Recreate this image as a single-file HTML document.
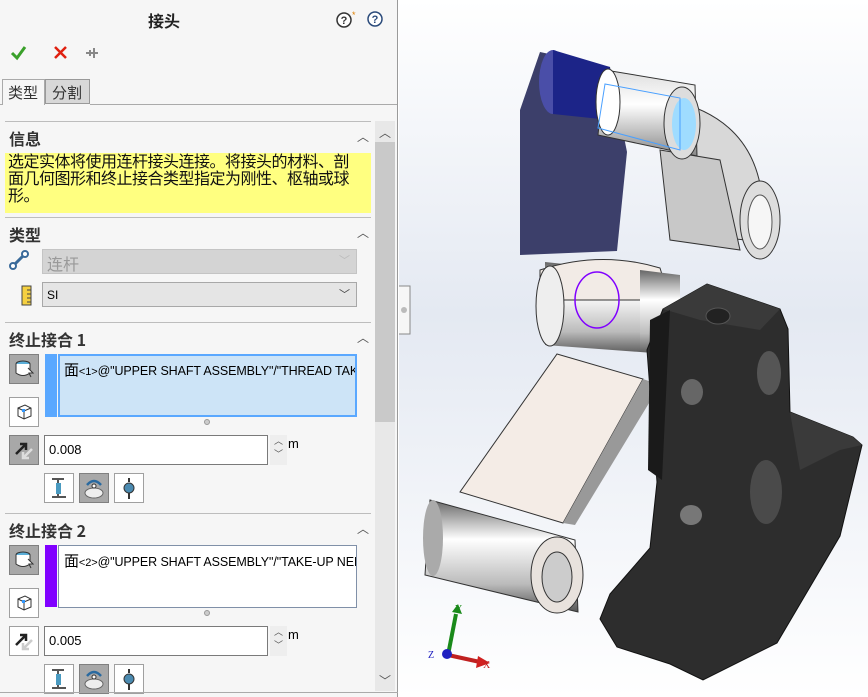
<!DOCTYPE html>
<html><head><meta charset="utf-8"><style>
*{margin:0;padding:0;box-sizing:border-box}
body{width:868px;height:697px;overflow:hidden;position:relative;background:#fff;font-family:"Liberation Sans","Noto Sans CJK SC",sans-serif;}
.a{position:absolute}
#panel{left:0;top:0;width:398px;height:697px;background:#f6f6f6;border-right:1px solid #9a9a9a}
.hdr{font-size:15px;font-weight:bold;color:#333;font-family:"Noto Sans CJK SC",sans-serif}
.chev{font-size:12px;color:#555}
.line{height:1px;background:#bdbdbd}
.btn{width:30px;height:30px;border:1px solid #a0a0a0;background:#fff}
.btn.on{background:#a8a8a8;border-color:#808080}
.inp{background:#fff;border:1px solid #7a7a7a;font-size:13px;padding:6px 0 0 4px;color:#000}
.sel{font-size:12px;color:#000;font-family:"Liberation Sans","Noto Sans CJK SC",sans-serif}
.sm{font-size:11px}
</style></head><body>
<div id="panel" class="a">
 <div class="a hdr" style="left:148px;top:8px;font-size:16px;color:#222">接头</div>
 <svg class="a" style="left:336px;top:10px" width="20" height="20"><circle cx="8" cy="10" r="7" fill="#fff" stroke="#333" stroke-width="1.5"/><text x="8" y="14" font-size="11" font-weight="bold" text-anchor="middle" fill="#333" font-family="Liberation Sans">?</text><text x="16" y="8" font-size="9" fill="#e08000" font-family="Liberation Sans">*</text></svg>
 <svg class="a" style="left:366px;top:10px" width="20" height="20"><circle cx="9" cy="9" r="7" fill="#fff" stroke="#2a4a7a" stroke-width="1.5"/><text x="9" y="13" font-size="11" font-weight="bold" text-anchor="middle" fill="#2a4a7a" font-family="Liberation Sans">?</text></svg>
 <svg class="a" style="left:10px;top:44px" width="90" height="18"><path d="M2 9 L7 14 L15 3" stroke="#3aa02a" stroke-width="3" fill="none"/><path d="M45 3 L56 14 M56 3 L45 14" stroke="#e02010" stroke-width="2.5"/><path d="M76 9 H88 M84 4 V14 M80 6 L80 12" stroke="#888" stroke-width="2"/></svg>
 <div class="a" style="left:2px;top:79px;width:43px;height:26px;border:1px solid #aaa;border-bottom:none;background:#f6f6f6;font-size:15px;color:#333;padding:2px 0 0 5px;font-family:'Noto Sans CJK SC',sans-serif">类型</div>
 <div class="a" style="left:45px;top:79px;width:45px;height:25px;border:1px solid #999;background:#d8d8d8;font-size:15px;color:#333;padding:2px 0 0 6px;font-family:'Noto Sans CJK SC',sans-serif">分割</div>
 <div class="a line" style="left:90px;top:104px;width:307px;background:#aaa"></div>
 <div class="a line" style="left:0;top:104px;width:2px;background:#aaa"></div>
 <div class="a" style="left:375px;top:121px;width:20px;height:570px;background:#e8e8e8"></div>
 <div class="a" style="left:375px;top:142px;width:20px;height:280px;background:#c9c9c9"></div>
 <div class="a chev" style="left:379px;top:124px">︿</div>
 <div class="a chev" style="left:379px;top:672px">﹀</div>
 <div class="a line" style="left:5px;top:121px;width:366px"></div>
 <div class="a hdr" style="left:9px;top:126px;font-size:16px">信息</div>
 <div class="a chev" style="left:357px;top:128px">︿</div>
 <div class="a" style="left:5px;top:153px;width:366px;height:60px;background:#ffff80;"></div>
 <div class="a" style="left:8px;top:152px;width:360px;font-size:16px;line-height:17px;color:#111;font-family:'Noto Sans CJK SC',sans-serif;letter-spacing:-0.5px">选定实体将使用连杆接头连接。将接头的材料、剖<br>面几何图形和终止接合类型指定为刚性、枢轴或球<br>形。</div>
 <div class="a line" style="left:5px;top:217px;width:366px"></div>
 <div class="a hdr" style="left:9px;top:222px;font-size:16px">类型</div>
 <div class="a chev" style="left:357px;top:224px">︿</div>
 <svg class="a" style="left:9px;top:250px" width="20" height="20"><path d="M4 16 L16 4" stroke="#3a6a9a" stroke-width="3"/><circle cx="4" cy="16" r="3" fill="#fff" stroke="#3a6a9a" stroke-width="2"/><circle cx="16" cy="4" r="3" fill="#fff" stroke="#3a6a9a" stroke-width="2"/></svg>
 <div class="a sel" style="left:42px;top:249px;width:315px;height:25px;background:#d4d4d4;border:1px solid #c4c4c4;color:#999;font-size:16px;padding:1px 0 0 4px">连杆<span class="a" style="right:6px;top:2px;font-size:11px;color:#bbb">﹀</span></div>
 <svg class="a" style="left:20px;top:285px" width="14" height="22"><rect x="2" y="1" width="9" height="19" fill="#f5d040" stroke="#444"/><path d="M7 5H11M7 9H11M7 13H11M7 17H11" stroke="#444"/></svg>
 <div class="a sel" style="left:42px;top:282px;width:315px;height:25px;background:#e5e5e5;border:1px solid #a8a8a8;padding:5px 0 0 4px">SI<span class="a" style="right:6px;top:3px;font-size:11px;color:#444">﹀</span></div>
 <div class="a line" style="left:5px;top:322px;width:366px"></div>
 <div class="a hdr" style="left:9px;top:327px;font-size:16px">终止接合 1</div>
 <div class="a chev" style="left:357px;top:329px">︿</div>
 <div class="a btn on" style="left:9px;top:354px"></div>
 <svg class="a" style="left:13px;top:358px" width="22" height="22"><ellipse cx="10" cy="6" rx="7" ry="3" fill="#5aaed8" stroke="#333"/><path d="M3 6V15Q10 20 17 15V6" fill="#fff" stroke="#333"/><path d="M15 10L20 15L16 15L18 19" stroke="#333" fill="#fff"/></svg>
 <div class="a" style="left:45px;top:354px;width:12px;height:63px;background:#5aa8ff"></div>
 <div class="a" style="left:58px;top:354px;width:299px;height:63px;background:#cde4f7;border:2px solid #5aa8ff;font-size:12.5px;padding:3px 0 0 4px;white-space:nowrap;overflow:hidden;letter-spacing:-0.1px"><span style="font-size:15px">面</span><span class="sm">&lt;1&gt;</span>@"UPPER SHAFT ASSEMBLY"/"THREAD TAK</div>
 <div class="a" style="left:204px;top:419px;width:6px;height:6px;border-radius:3px;background:#ccc;border:1px solid #999"></div>
 <div class="a btn" style="left:9px;top:397px"></div>
 <svg class="a" style="left:15px;top:403px" width="18" height="18"><path d="M3 5L10 2L16 5V13L9 16L3 13Z" fill="#fff" stroke="#333"/><path d="M3 5L9 8L16 5M9 8V16" stroke="#333" fill="none"/><rect x="7" y="6" width="3" height="3" fill="#3399ff"/></svg>
 <div class="a btn on" style="left:9px;top:435px"></div>
 <svg class="a" style="left:13px;top:439px" width="22" height="22"><path d="M3 15L13 5M7 5H13V11" stroke="#222" stroke-width="2.5" fill="none"/><path d="M19 10L10 19M10 13V19H16" stroke="#ddd" stroke-width="2.5" fill="none"/></svg>
 <div class="a inp" style="left:44px;top:435px;width:224px;height:30px">0.008</div>
 <div class="a" style="left:270px;top:435px;width:17px;height:30px;background:#eee;font-size:9px;color:#555;text-align:center;line-height:13px">︿<br>﹀</div>
 <div class="a" style="left:288px;top:436px;font-size:13px">m</div>
 <div class="a btn" style="left:44px;top:473px"></div>
 <div class="a btn on" style="left:79px;top:473px"></div>
 <div class="a btn" style="left:114px;top:473px"></div>
 <svg class="a" style="left:44px;top:473px" width="100" height="30"><path d="M8 6H20M14 6V24M8 24H22" stroke="#555" stroke-width="2"/><rect x="12" y="10" width="5" height="11" fill="#4a9ac0"/><ellipse cx="50" cy="20" rx="9" ry="5" fill="#eee" stroke="#666"/><path d="M43 12Q50 4 57 12" stroke="#2a6aa0" stroke-width="2.5" fill="none"/><circle cx="50" cy="13" r="2" fill="#fff" stroke="#333"/><path d="M85 5V9" stroke="#333" stroke-width="2"/><circle cx="85" cy="15" r="5" fill="#4a8ab0" stroke="#333"/><path d="M85 20V26" stroke="#333" stroke-width="2"/></svg>
 <div class="a line" style="left:5px;top:513px;width:366px"></div>
 <div class="a hdr" style="left:9px;top:518px;font-size:16px">终止接合 2</div>
 <div class="a chev" style="left:357px;top:520px">︿</div>
 <div class="a btn on" style="left:9px;top:545px"></div>
 <svg class="a" style="left:13px;top:549px" width="22" height="22"><ellipse cx="10" cy="6" rx="7" ry="3" fill="#5aaed8" stroke="#333"/><path d="M3 6V15Q10 20 17 15V6" fill="#fff" stroke="#333"/><path d="M15 10L20 15L16 15L18 19" stroke="#333" fill="#fff"/></svg>
 <div class="a" style="left:45px;top:545px;width:12px;height:62px;background:#8000ff"></div>
 <div class="a" style="left:58px;top:545px;width:299px;height:63px;background:#fff;border:1px solid #8090a8;font-size:12.5px;padding:4px 0 0 5px;white-space:nowrap;overflow:hidden;letter-spacing:-0.1px"><span style="font-size:15px">面</span><span class="sm">&lt;2&gt;</span>@"UPPER SHAFT ASSEMBLY"/"TAKE-UP NEE</div>
 <div class="a" style="left:204px;top:610px;width:6px;height:6px;border-radius:3px;background:#ccc;border:1px solid #999"></div>
 <div class="a btn" style="left:9px;top:588px"></div>
 <svg class="a" style="left:15px;top:594px" width="18" height="18"><path d="M3 5L10 2L16 5V13L9 16L3 13Z" fill="#fff" stroke="#333"/><path d="M3 5L9 8L16 5M9 8V16" stroke="#333" fill="none"/><rect x="7" y="6" width="3" height="3" fill="#3399ff"/></svg>
 <div class="a btn" style="left:9px;top:626px"></div>
 <svg class="a" style="left:13px;top:630px" width="22" height="22"><path d="M3 15L13 5M7 5H13V11" stroke="#222" stroke-width="2.5" fill="none"/><path d="M19 10L10 19M10 13V19H16" stroke="#ccc" stroke-width="2.5" fill="none"/></svg>
 <div class="a inp" style="left:44px;top:626px;width:224px;height:30px">0.005</div>
 <div class="a" style="left:270px;top:626px;width:17px;height:30px;background:#eee;font-size:9px;color:#555;text-align:center;line-height:13px">︿<br>﹀</div>
 <div class="a" style="left:288px;top:627px;font-size:13px">m</div>
 <div class="a btn" style="left:44px;top:664px"></div>
 <div class="a btn on" style="left:79px;top:664px"></div>
 <div class="a btn" style="left:114px;top:664px"></div>
 <svg class="a" style="left:44px;top:664px" width="100" height="30"><path d="M8 6H20M14 6V24M8 24H22" stroke="#555" stroke-width="2"/><rect x="12" y="10" width="5" height="11" fill="#4a9ac0"/><ellipse cx="50" cy="20" rx="9" ry="5" fill="#eee" stroke="#666"/><path d="M43 12Q50 4 57 12" stroke="#2a6aa0" stroke-width="2.5" fill="none"/><circle cx="50" cy="13" r="2" fill="#fff" stroke="#333"/><path d="M85 5V9" stroke="#333" stroke-width="2"/><circle cx="85" cy="15" r="5" fill="#4a8ab0" stroke="#333"/><path d="M85 20V26" stroke="#333" stroke-width="2"/></svg>
 <div class="a line" style="left:0;top:692px;width:398px;background:#aaa"></div>
</div>
<svg class="a" style="left:399px;top:0" width="469" height="697" viewBox="399 0 469 697">
 <defs>
  <linearGradient id="bg" x1="0" y1="0" x2="0" y2="1"><stop offset="0" stop-color="#fff"/><stop offset="0.45" stop-color="#e4e9f2"/><stop offset="1" stop-color="#fff"/></linearGradient>
  <linearGradient id="cyl" x1="0" y1="0" x2="0" y2="1"><stop offset="0" stop-color="#666"/><stop offset="0.35" stop-color="#fff"/><stop offset="0.75" stop-color="#bbb"/><stop offset="1" stop-color="#555"/></linearGradient>
  <linearGradient id="wcyl" x1="0" y1="0" x2="0" y2="1"><stop offset="0" stop-color="#ddd"/><stop offset="0.4" stop-color="#fff"/><stop offset="1" stop-color="#888"/></linearGradient>
 </defs>
 <rect x="399" y="0" width="469" height="697" fill="url(#bg)"/>
 <path d="M399 286H410V334H399" fill="#f6f6f6" stroke="#888"/>
 <circle cx="404" cy="310" r="3" fill="#bbb"/>
 <polygon points="520,110 540,52 610,67 627,152 617,251 520,255" fill="#3c3f6a"/>
 <ellipse cx="553" cy="82" rx="14" ry="32" fill="#4a4ea8"/>
 <polygon points="553,50 610,67 610,120 553,114" fill="#1c2488"/>
 <ellipse cx="548" cy="288" rx="10" ry="20" fill="#3a3e98"/>
 <path d="M670 100 Q760 120 763 210 L745 240 L700 235 L680 160Z" fill="#d8d8d8" stroke="#333"/>
 <path d="M660 150 L720 160 L740 250 L670 240 Z" fill="#c8c8c8" stroke="#333"/>
 <polygon points="605,70 695,85 697,156 598,135" fill="url(#wcyl)" stroke="#333"/>
 <ellipse cx="608" cy="102" rx="12" ry="33" fill="#fff" stroke="#333"/>
 <ellipse cx="682" cy="123" rx="18" ry="36" fill="#ddd" stroke="#333"/>
 <ellipse cx="684" cy="124" rx="12" ry="26" fill="#9fdcff"/>
 <polygon points="605,84 680,98 680,150 598,128" fill="none" stroke="#4aa0ff"/>
 <ellipse cx="760" cy="220" rx="20" ry="39" fill="#ddd" stroke="#333"/>
 <ellipse cx="760" cy="222" rx="12" ry="27" fill="#f6f6f6" stroke="#555"/>
 <polygon points="557,354 643,379 563,523 460,492" fill="#f4ece6" stroke="#333"/>
 <polygon points="643,379 660,385 575,525 563,523" fill="#999"/>
 <polygon points="545,262 670,275 680,355 545,345" fill="url(#cyl)"/>
 <path d="M540 270 Q600 250 660 268 L670 300 L540 300Z" fill="#f2ebe6" stroke="#333"/>
 <ellipse cx="550" cy="306" rx="14" ry="40" fill="#eee" stroke="#333"/>
 <polygon points="640,270 680,275 680,355 640,350" fill="url(#cyl)"/>
 <ellipse cx="597" cy="300" rx="22" ry="28" fill="none" stroke="#8000ff" stroke-width="1.5"/>
 <polygon points="430,500 575,540 578,612 425,575" fill="url(#cyl)" stroke="#333"/>
 <ellipse cx="433" cy="538" rx="10" ry="38" fill="#aaa"/>
 <ellipse cx="557" cy="575" rx="26" ry="38" fill="#e8e2dd" stroke="#333"/>
 <ellipse cx="557" cy="577" rx="15" ry="25" fill="#ccc" stroke="#333"/>
 <polygon points="663,309 707,284 780,309 788,329 790,412 853,437 862,445 840,536 777,643 703,680 670,664 617,647 600,619 610,594 650,548 657,482 647,350" fill="#2d2d2d" stroke="#111"/>
 <polygon points="663,309 707,284 780,309 760,330 700,320" fill="#3a3a3a"/>
 <polygon points="650,320 670,310 662,480 648,470" fill="#1a1a1a"/>
 <ellipse cx="718" cy="316" rx="12" ry="8" fill="#222" stroke="#555"/>
 <ellipse cx="692" cy="392" rx="11" ry="13" fill="#666"/>
 <ellipse cx="769" cy="373" rx="12" ry="22" fill="#555"/>
 <ellipse cx="766" cy="492" rx="16" ry="32" fill="#4a4a4a"/>
 <ellipse cx="691" cy="515" rx="11" ry="10" fill="#777"/>
 <polygon points="790,412 853,437 862,445 840,450 800,470" fill="#3a3a3a"/>
 <path d="M448 655 L456 614" stroke="#1a8a1a" stroke-width="4"/>
 <polygon points="452,612 462,614 458,604" fill="#1a8a1a"/>
 <path d="M448 655 L480 662" stroke="#c02020" stroke-width="4"/>
 <polygon points="478,656 490,663 476,668" fill="#d02020"/>
 <circle cx="447" cy="654" r="5" fill="#2020c0"/>
 <text x="455" y="612" font-size="10" fill="#1a8a1a" font-family="Liberation Serif">Y</text>
 <text x="428" y="658" font-size="10" fill="#2020c0" font-family="Liberation Serif">Z</text>
 <text x="483" y="668" font-size="10" fill="#c02020" font-family="Liberation Serif">X</text>
</svg>
</body></html>
